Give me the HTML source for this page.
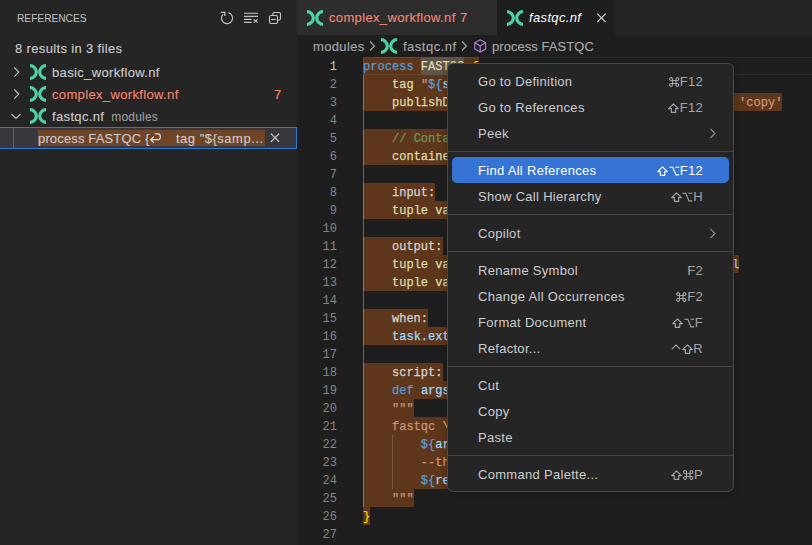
<!DOCTYPE html>
<html><head><meta charset="utf-8">
<style>
*{margin:0;padding:0;box-sizing:border-box}
html,body{width:812px;height:545px;overflow:hidden;background:#1e1e1e;font-family:"Liberation Sans",sans-serif;position:relative}
.abs{position:absolute}
#side{left:0;top:0;width:297px;height:545px;background:#252526}
.t{position:absolute;white-space:pre;color:#cccccc;font-size:13px;line-height:22px;letter-spacing:0.35px;-webkit-text-stroke:0.12px currentColor}
.ln{position:absolute;left:297px;width:40px;padding-top:1px;text-align:right;font-family:"Liberation Mono",monospace;font-size:12px;line-height:18px;color:#858585}
.ln.cur{color:#c6c6c6}
.code{position:absolute;left:363px;font-family:"Liberation Mono",monospace;font-size:12px;line-height:18px;white-space:pre;color:#d4d4d4;letter-spacing:0.03px;padding-top:1px;-webkit-text-stroke:0.25px currentColor}
.hl{position:absolute;left:363px;background:#5d361b;height:18px}
.curline{position:absolute;left:363px;top:57px;width:452px;height:18px;border:1px solid rgba(255,255,255,0.065)}
.kw{color:#569cd6}.fn{color:#dcdcaa}.str{color:#ce9178}.cm{color:#6a9955}.var{color:#9cdcfe}.br{color:#ffd700}.esc{color:#d7ba7d}.wh{color:#dcdcaa}
#menu{left:447px;top:63px;width:287px;height:429px;background:#252526;border:1px solid #4a4a4a;border-radius:6px;box-shadow:0 1px 6px rgba(0,0,0,0.3)}
.mi{position:absolute;left:30px;font-size:13px;line-height:26px;height:26px;color:#cccccc;white-space:pre;letter-spacing:0.3px}
.ks{position:absolute;right:30px;font-size:13px;line-height:26px;height:26px;color:#cccccc;white-space:pre;display:flex;align-items:center;letter-spacing:0.3px}
.g{position:relative;margin-right:0.6px;margin-top:-1px}
.sep{position:absolute;left:0px;right:0px;height:1px;background:#454545}
svg{position:absolute;overflow:visible}
</style></head><body>
<div id="side" class="abs">
  <div class="t" style="left:17px;top:7px;font-size:11px;line-height:22px;letter-spacing:0px;transform:scaleX(0.925);transform-origin:0 0;-webkit-text-stroke:0;color:#c4c4c4">REFERENCES</div>
  <!-- toolbar icons -->
  <svg style="left:219px;top:10px" width="16" height="16" viewBox="0 0 16 16"><path d="M9.45 2.69A5.6 5.6 0 1 1 3.77 4.43" fill="none" stroke="#c5c5c5" stroke-width="1.2"/><path d="M1.8 2.3H5.8V6.1" fill="none" stroke="#c5c5c5" stroke-width="1.3"/></svg>
  <svg style="left:243px;top:10px" width="16" height="16" viewBox="0 0 16 16"><path d="M1 3.3H15M1 6.4H15M1 9.4H8.6M1 12.4H8.6" stroke="#c5c5c5" stroke-width="1.1"/><path d="M10.6 9.4L14.6 12.6M14.6 9.4L10.6 12.6" stroke="#c5c5c5" stroke-width="1.1"/></svg>
  <svg style="left:268px;top:10px" width="16" height="16" viewBox="0 0 16 16"><path d="M4.8 5.5V4A1.5 1.5 0 0 1 6.3 2.5H11A1.5 1.5 0 0 1 12.5 4V8.5A1.5 1.5 0 0 1 11 10H9.5" fill="none" stroke="#c5c5c5" stroke-width="1.1"/><rect x="1.5" y="5.5" width="8" height="8" rx="1.5" fill="none" stroke="#c5c5c5" stroke-width="1.1"/><path d="M3.2 9.5H7.8" stroke="#c5c5c5" stroke-width="1.1"/></svg>
  <div class="t" style="left:15px;top:38px">8 results in 3 files</div>
  <!-- rows -->
  <svg style="left:13px;top:66px" width="10" height="12" viewBox="0 0 10 12"><path d="M1.3 1.5L5.8 6.1L1.3 10.7" fill="none" stroke="#c5c5c5" stroke-width="1.1"/></svg>
  <svg style="left:13px;top:88px" width="10" height="12" viewBox="0 0 10 12"><path d="M1.3 1.5L5.8 6.1L1.3 10.7" fill="none" stroke="#c5c5c5" stroke-width="1.1"/></svg>
  <svg style="left:11px;top:112px" width="12" height="10" viewBox="0 0 12 10"><path d="M0.3 1.8L5 6.5L9.7 1.8" fill="none" stroke="#c5c5c5" stroke-width="1.1"/></svg>
  <svg class="nf" style="left:30px;top:64px" width="16" height="16" viewBox="0 0 16 16"><use href="#nfi"/></svg>
  <svg class="nf" style="left:30px;top:86px" width="16" height="16" viewBox="0 0 16 16"><use href="#nfi"/></svg>
  <svg class="nf" style="left:30px;top:108px" width="16" height="16" viewBox="0 0 16 16"><use href="#nfi"/></svg>
  <div class="t" style="left:52px;top:62px">basic_workflow.nf</div>
  <div class="t" style="left:52px;top:84px;color:#f48771">complex_workflow.nf</div>
  <div class="t" style="left:274px;top:84px;color:#f48771">7</div>
  <div class="t" style="left:52px;top:106px">fastqc.nf<span style="color:#9d9d9d;font-size:12px;margin-left:7px;letter-spacing:0.2px">modules</span></div>
  <div class="abs" style="left:-1px;top:127px;width:298px;height:22px;background:#37373d;border:1px solid #2b79d0"></div>
  <div class="abs" style="left:13px;top:127px;width:1px;height:22px;background:#626262"></div>
  <div class="abs" style="left:38px;top:130px;width:227px;height:16px;background:#6f4528"></div>
  <div class="t" style="left:38px;top:128px;letter-spacing:0.15px">process FASTQC {</div>
  <svg style="left:149px;top:132px" width="13" height="12" viewBox="0 0 13 12"><path d="M5.8 1.9H8.9A2.4 2.4 0 0 1 11.3 4.3V5.3A2.4 2.4 0 0 1 8.9 7.7H1.8M4.9 4.6L1.7 7.7L4.9 10.8" fill="none" stroke="#dddddd" stroke-width="1.2" stroke-linejoin="round"/></svg>
  <div class="t" style="left:176px;top:128px;letter-spacing:0.5px">tag "${samp...</div>
  <svg style="left:267px;top:130px" width="16" height="16" viewBox="0 0 16 16"><path d="M3.9 3.7L12.1 11.9M12.1 3.7L3.9 11.9" stroke="#d8d8d8" stroke-width="1.1"/></svg>
</div>
<svg width="0" height="0" style="position:absolute"><defs><g id="nfi"><path d="M0 1.7A6.3 6.3 0 0 1 0 14.3" fill="none" stroke="#4fd1a5" stroke-width="3.2"/><path d="M16 1.7A6.3 6.3 0 0 0 16 14.3" fill="none" stroke="#4fd1a5" stroke-width="3.2"/></g></defs></svg>
<!-- tabs -->
<div class="abs" style="left:297px;top:0;width:515px;height:35px;background:#252526"></div>
<div class="abs" style="left:297px;top:0;width:200px;height:35px;background:#2d2d2d"></div>
<svg style="left:307px;top:10px" width="16" height="16" viewBox="0 0 16 16"><use href="#nfi"/></svg>
<div class="t" style="left:329px;top:7px;color:#f48771">complex_workflow.nf</div><div class="t" style="left:460px;top:7px;color:#f48771">7</div>
<div class="abs" style="left:497px;top:0;width:118px;height:35px;background:#1e1e1e"></div>
<svg style="left:507px;top:10px" width="16" height="16" viewBox="0 0 16 16"><use href="#nfi"/></svg>
<div class="t" style="left:529px;top:7px;color:#ffffff;font-style:italic;-webkit-text-stroke:0">fastqc.nf</div>
<svg style="left:594px;top:10px" width="16" height="16" viewBox="0 0 16 16"><path d="M3.3 3.7L11.7 12.1M11.7 3.7L3.3 12.1" stroke="#d8d8d8" stroke-width="1.1"/></svg>
<!-- breadcrumbs -->
<div class="t" style="left:313px;top:36px;color:#a9a9a9">modules</div>
<svg style="left:367px;top:41px" width="10" height="10" viewBox="0 0 10 10"><path d="M3 0.5L7.5 5L3 9.5" fill="none" stroke="#a9a9a9" stroke-width="1.1"/></svg>
<svg style="left:381px;top:38px" width="16" height="16" viewBox="0 0 16 16"><use href="#nfi"/></svg>
<div class="t" style="left:403px;top:36px;color:#a9a9a9;letter-spacing:0.5px">fastqc.nf</div>
<svg style="left:459px;top:41px" width="10" height="10" viewBox="0 0 10 10"><path d="M3 0.5L7.5 5L3 9.5" fill="none" stroke="#a9a9a9" stroke-width="1.1"/></svg>
<svg style="left:474px;top:39px" width="14" height="15" viewBox="0 0 14 15"><path d="M6.2 0.7L11.6 3.8V10L6.2 13.1L0.8 10V3.8Z M0.8 3.8L6.2 6.9L11.6 3.8 M6.2 6.9V13.1" fill="none" stroke="#b180d7" stroke-width="1.1" stroke-linejoin="round"/></svg>
<div class="t" style="left:492px;top:36px;color:#a9a9a9;letter-spacing:0.05px">process FASTQC</div>
<!-- editor -->
<div class="ln cur" style="top:57px">1</div>
<div class="ln" style="top:75px">2</div>
<div class="ln" style="top:93px">3</div>
<div class="ln" style="top:111px">4</div>
<div class="ln" style="top:129px">5</div>
<div class="ln" style="top:147px">6</div>
<div class="ln" style="top:165px">7</div>
<div class="ln" style="top:183px">8</div>
<div class="ln" style="top:201px">9</div>
<div class="ln" style="top:219px">10</div>
<div class="ln" style="top:237px">11</div>
<div class="ln" style="top:255px">12</div>
<div class="ln" style="top:273px">13</div>
<div class="ln" style="top:291px">14</div>
<div class="ln" style="top:309px">15</div>
<div class="ln" style="top:327px">16</div>
<div class="ln" style="top:345px">17</div>
<div class="ln" style="top:363px">18</div>
<div class="ln" style="top:381px">19</div>
<div class="ln" style="top:399px">20</div>
<div class="ln" style="top:417px">21</div>
<div class="ln" style="top:435px">22</div>
<div class="ln" style="top:453px">23</div>
<div class="ln" style="top:471px">24</div>
<div class="ln" style="top:489px">25</div>
<div class="ln" style="top:507px">26</div>
<div class="ln" style="top:525px">27</div>
<div class="hl" style="top:57px;width:115.68px"></div>
<div class="hl" style="top:75px;width:159.06px"></div>
<div class="hl" style="top:93px;width:419.34px"></div>
<div class="hl" style="top:129px;width:202.44px"></div>
<div class="hl" style="top:147px;width:332.58px"></div>
<div class="hl" style="top:183px;width:72.3px"></div>
<div class="hl" style="top:201px;width:267.51px"></div>
<div class="hl" style="top:237px;width:79.53px"></div>
<div class="hl" style="top:255px;width:375.96px"></div>
<div class="hl" style="top:273px;width:361.5px"></div>
<div class="hl" style="top:309px;width:65.07px"></div>
<div class="hl" style="top:327px;width:303.66px"></div>
<div class="hl" style="top:363px;width:79.53px"></div>
<div class="hl" style="top:381px;width:245.82px"></div>
<div class="hl" style="top:399px;width:50.61px"></div>
<div class="hl" style="top:417px;width:93.99px"></div>
<div class="hl" style="top:435px;width:130.14px"></div>
<div class="hl" style="top:453px;width:238.59px"></div>
<div class="hl" style="top:471px;width:115.68px"></div>
<div class="hl" style="top:489px;width:50.61px"></div>
<div class="hl" style="top:507px;width:7.23px"></div>
<div class="curline"></div>
<div class="abs" style="left:420.84000000000003px;top:57px;width:43.38px;height:18px;background:#605448"></div>
<div class="abs" style="left:363px;top:75px;width:1px;height:432px;background:rgba(210,210,210,0.4)"></div>
<div class="abs" style="left:392px;top:435px;width:1px;height:54px;background:rgba(210,210,210,0.22)"></div>
<div class="code" style="top:57px"><span class="kw">process</span> <span class="wh">FASTQC</span> <span class="br">{</span></div>
<div class="code" style="top:75px">    <span class="fn">tag</span> <span class="str">"</span><span class="kw">${</span><span class="var">sample_id</span><span class="kw">}</span><span class="str">"</span></div>
<div class="code" style="top:93px">    <span class="fn">publishDir</span> <span class="str">"</span><span class="kw">${</span><span class="var">params.outdir</span><span class="kw">}</span><span class="str">/qc/fastqc/"</span>, <span class="var">mode</span>: <span class="str">'copy'</span></div>
<div class="code" style="top:129px">    <span class="cm">// Container with FastQC</span></div>
<div class="code" style="top:147px">    <span class="fn">container</span> <span class="str">'biocontainers/fastqc:0.11.9--0'</span></div>
<div class="code" style="top:183px">    input:</div>
<div class="code" style="top:201px">    <span class="fn">tuple</span> <span class="fn">val</span>(<span class="var">sample_id</span>), <span class="fn">path</span>(<span class="var">reads</span>)</div>
<div class="code" style="top:237px">    output:</div>
<div class="code" style="top:255px">    <span class="fn">tuple</span> <span class="fn">val</span>(<span class="var">sample_id</span>), <span class="fn">path</span>(<span class="str">"*.html"</span>), <span class="var">emit</span>: <span class="var">html</span></div>
<div class="code" style="top:273px">    <span class="fn">tuple</span> <span class="fn">val</span>(<span class="var">sample_id</span>), <span class="fn">path</span>(<span class="str">"*.zip"</span>), <span class="var">emit</span>: <span class="var">zip</span></div>
<div class="code" style="top:309px">    when:</div>
<div class="code" style="top:327px">    <span class="var">task.ext.when</span> == <span class="kw">null</span> || <span class="var">task.ext.when</span></div>
<div class="code" style="top:363px">    script:</div>
<div class="code" style="top:381px">    <span class="kw">def</span> <span class="var">args</span> = <span class="var">task.ext.args</span> ?: <span class="str">''</span></div>
<div class="code" style="top:399px">    <span class="str">"""</span></div>
<div class="code" style="top:417px">    <span class="str">fastqc </span><span class="esc">\\</span></div>
<div class="code" style="top:435px">        <span class="kw">${</span><span class="var">args</span><span class="kw">}</span> <span class="esc">\\</span></div>
<div class="code" style="top:453px">        <span class="str">--threads </span><span class="kw">${</span><span class="var">task.cpus</span><span class="kw">}</span> <span class="esc">\\</span></div>
<div class="code" style="top:471px">        <span class="kw">${</span><span class="var">reads</span><span class="kw">}</span></div>
<div class="code" style="top:489px">    <span class="str">"""</span></div>
<div class="code" style="top:507px"><span class="br">}</span></div>
<div id="menu" class="abs">
<div class="abs" style="left:4px;top:93px;width:277px;height:26px;background:#3574d5;border-radius:5px"></div>
<div class="sep" style="top:87px"></div>
<div class="sep" style="top:150px"></div>
<div class="sep" style="top:187px"></div>
<div class="sep" style="top:302px"></div>
<div class="sep" style="top:391px"></div>
<div class="mi" style="top:5px">Go to Definition</div>
<div class="ks" style="top:5px;color:#a5a5a5"><svg class="g" width="10.5" height="10" viewBox="0 0 10.5 10"><path d="M3.5 3.5V2.2A1.45 1.45 0 1 0 2.2 3.5H8.3A1.45 1.45 0 1 0 7 2.2V7.8A1.45 1.45 0 1 0 8.3 6.5H2.2A1.45 1.45 0 1 0 3.5 7.8Z" fill="none" stroke="currentColor" stroke-width="1.1"/></svg><span>F12</span></div>
<div class="mi" style="top:31px">Go to References</div>
<div class="ks" style="top:31px;color:#a5a5a5"><svg class="g" width="11" height="10" viewBox="0 0 11 10"><path d="M5.5 0.8L10.3 5.6H7.7V9.3H3.3V5.6H0.7Z" fill="none" stroke="currentColor" stroke-width="1.15" stroke-linejoin="round"/></svg><span>F12</span></div>
<div class="mi" style="top:57px">Peek</div>
<svg class="abs" style="left:261px;top:64px" width="8" height="11" viewBox="0 0 8 11"><path d="M1.5 1L6 5.5L1.5 10" fill="none" stroke="#8f8f8f" stroke-width="1.1"/></svg>
<div class="mi" style="top:94px;color:#ffffff">Find All References</div>
<div class="ks" style="top:94px;color:#ffffff"><svg class="g" width="11" height="10" viewBox="0 0 11 10"><path d="M5.5 0.8L10.3 5.6H7.7V9.3H3.3V5.6H0.7Z" fill="none" stroke="currentColor" stroke-width="1.15" stroke-linejoin="round"/></svg><svg class="g" width="10.6" height="10" viewBox="0 0 11 10"><path d="M0.3 1.1H3.9L7.3 9H10.6M6.6 1.1H10.6" fill="none" stroke="currentColor" stroke-width="1.15"/></svg><span>F12</span></div>
<div class="mi" style="top:120px">Show Call Hierarchy</div>
<div class="ks" style="top:120px;color:#a5a5a5"><svg class="g" width="11" height="10" viewBox="0 0 11 10"><path d="M5.5 0.8L10.3 5.6H7.7V9.3H3.3V5.6H0.7Z" fill="none" stroke="currentColor" stroke-width="1.15" stroke-linejoin="round"/></svg><svg class="g" width="10.6" height="10" viewBox="0 0 11 10"><path d="M0.3 1.1H3.9L7.3 9H10.6M6.6 1.1H10.6" fill="none" stroke="currentColor" stroke-width="1.15"/></svg><span>H</span></div>
<div class="mi" style="top:157px">Copilot</div>
<svg class="abs" style="left:261px;top:164px" width="8" height="11" viewBox="0 0 8 11"><path d="M1.5 1L6 5.5L1.5 10" fill="none" stroke="#8f8f8f" stroke-width="1.1"/></svg>
<div class="mi" style="top:194px">Rename Symbol</div>
<div class="ks" style="top:194px;color:#a5a5a5"><span>F2</span></div>
<div class="mi" style="top:220px">Change All Occurrences</div>
<div class="ks" style="top:220px;color:#a5a5a5"><svg class="g" width="10.5" height="10" viewBox="0 0 10.5 10"><path d="M3.5 3.5V2.2A1.45 1.45 0 1 0 2.2 3.5H8.3A1.45 1.45 0 1 0 7 2.2V7.8A1.45 1.45 0 1 0 8.3 6.5H2.2A1.45 1.45 0 1 0 3.5 7.8Z" fill="none" stroke="currentColor" stroke-width="1.1"/></svg><span>F2</span></div>
<div class="mi" style="top:246px">Format Document</div>
<div class="ks" style="top:246px;color:#a5a5a5"><svg class="g" width="11" height="10" viewBox="0 0 11 10"><path d="M5.5 0.8L10.3 5.6H7.7V9.3H3.3V5.6H0.7Z" fill="none" stroke="currentColor" stroke-width="1.15" stroke-linejoin="round"/></svg><svg class="g" width="10.6" height="10" viewBox="0 0 11 10"><path d="M0.3 1.1H3.9L7.3 9H10.6M6.6 1.1H10.6" fill="none" stroke="currentColor" stroke-width="1.15"/></svg><span>F</span></div>
<div class="mi" style="top:272px">Refactor...</div>
<div class="ks" style="top:272px;color:#a5a5a5"><svg class="g" width="10" height="10" viewBox="0 0 10 10"><path d="M0.8 5.2L5 1L9.2 5.2" fill="none" stroke="currentColor" stroke-width="1.15"/></svg><svg class="g" width="11" height="10" viewBox="0 0 11 10"><path d="M5.5 0.8L10.3 5.6H7.7V9.3H3.3V5.6H0.7Z" fill="none" stroke="currentColor" stroke-width="1.15" stroke-linejoin="round"/></svg><span>R</span></div>
<div class="mi" style="top:309px">Cut</div>
<div class="mi" style="top:335px">Copy</div>
<div class="mi" style="top:361px">Paste</div>
<div class="mi" style="top:398px">Command Palette...</div>
<div class="ks" style="top:398px;color:#a5a5a5"><svg class="g" width="11" height="10" viewBox="0 0 11 10"><path d="M5.5 0.8L10.3 5.6H7.7V9.3H3.3V5.6H0.7Z" fill="none" stroke="currentColor" stroke-width="1.15" stroke-linejoin="round"/></svg><svg class="g" width="10.5" height="10" viewBox="0 0 10.5 10"><path d="M3.5 3.5V2.2A1.45 1.45 0 1 0 2.2 3.5H8.3A1.45 1.45 0 1 0 7 2.2V7.8A1.45 1.45 0 1 0 8.3 6.5H2.2A1.45 1.45 0 1 0 3.5 7.8Z" fill="none" stroke="currentColor" stroke-width="1.1"/></svg><span>P</span></div>
</div>
</body></html>
